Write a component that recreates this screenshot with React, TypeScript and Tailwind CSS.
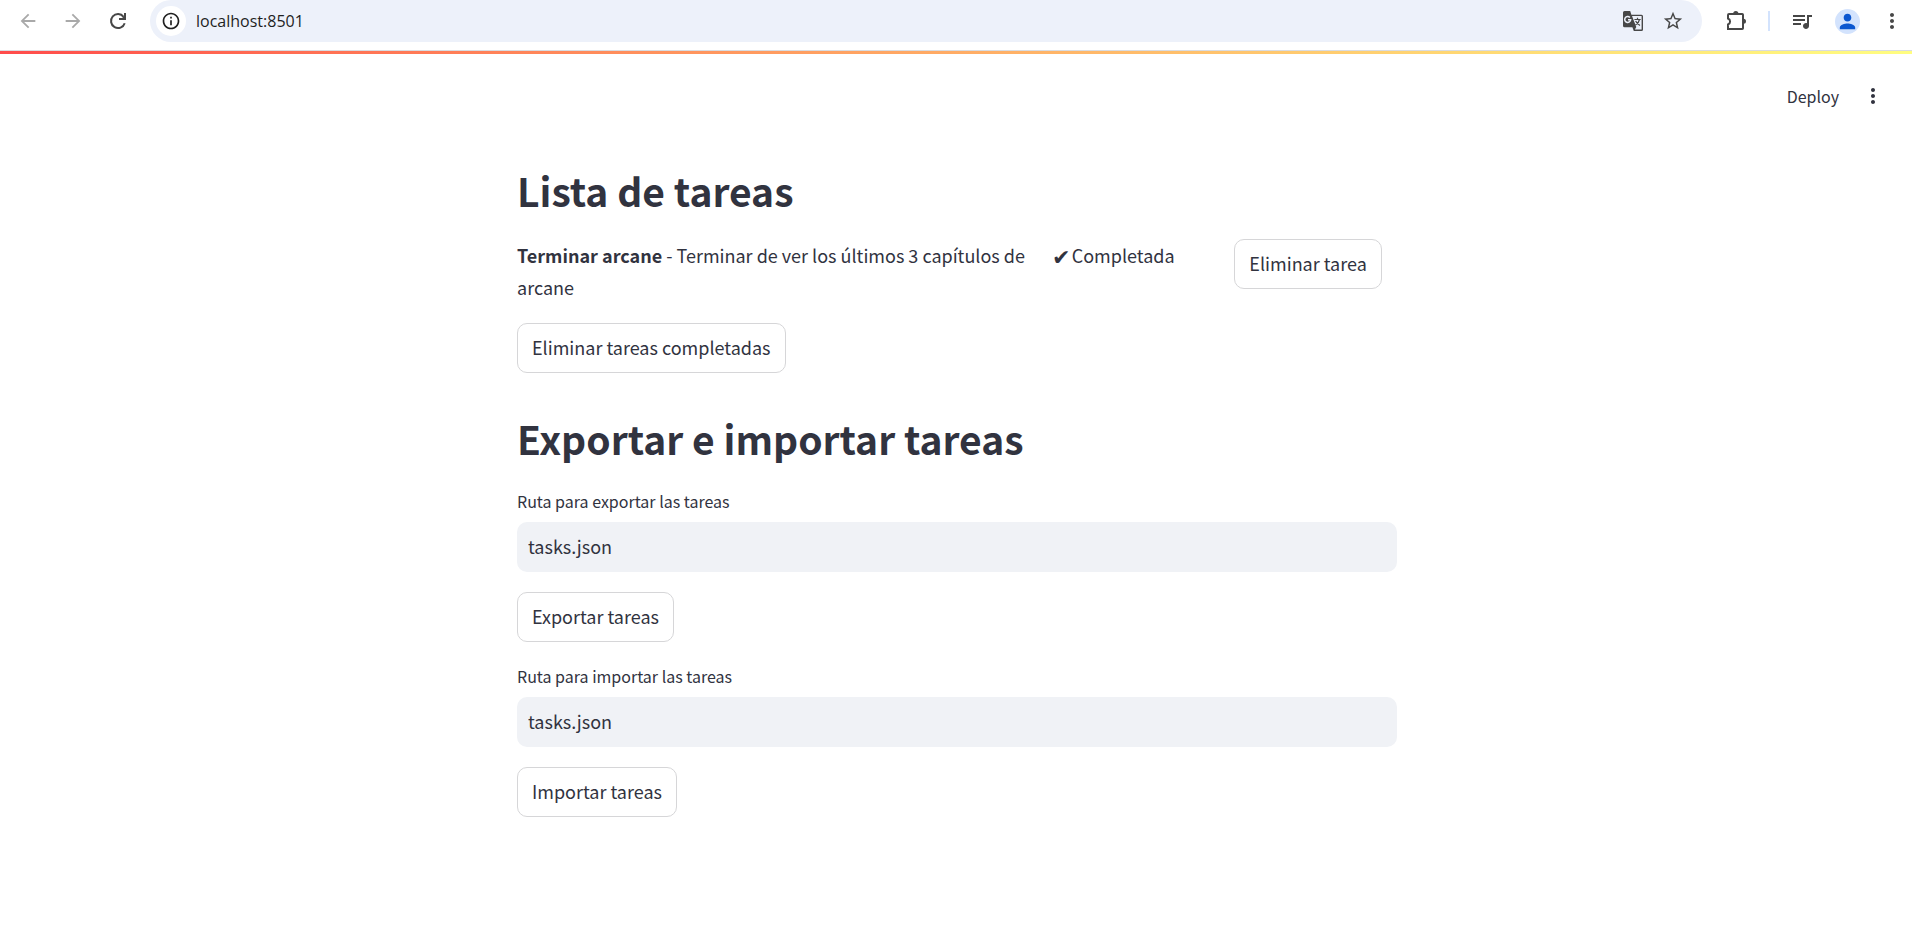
import { useId, useState } from "react";
import type { ReactNode } from "react";
import {
  MdArrowBack,
  MdArrowForward,
  MdInfoOutline,
  MdMoreVert,
  MdPerson,
  MdQueueMusic,
  MdStarBorder,
} from "react-icons/md";

function IconButton({ label, className = "", children }: { label: string; className?: string; children: ReactNode }) {
  return (
    <button type="button" aria-label={label} className={`flex shrink-0 items-center justify-center ${className}`}>
      {children}
    </button>
  );
}

function ReloadIcon() {
  return (
    <svg width="24" height="24" viewBox="0 0 24 24" aria-hidden="true">
      <path d="M18.700 14.200A7 7 0 1 1 17.600 7.800" fill="none" stroke="currentColor" strokeWidth="2" />
      <path d="M18 4h2v7h-7V9h3.200L18 7.200z" fill="currentColor" />
    </svg>
  );
}

function ExtensionIcon() {
  return (
    <svg width="24" height="24" viewBox="0 0 24 24" aria-hidden="true">
      <path d="M5 5h13.200a.8.8 0 0 1 .8.800v13.400a.8.8 0 0 1-.8.800H4v-4.500a3.200 3.200 0 0 0 0-6V6a1 1 0 0 1 1-1z" fill="none" stroke="currentColor" strokeWidth="2" />
      <path d="M9.200 4.500a2.600 2.600 0 0 1 5.200 0zM19.500 9.700a2.500 2.500 0 0 1 0 5z" fill="currentColor" />
    </svg>
  );
}

function TranslateIcon() {
  return (
    <svg width="22" height="22" viewBox="0 0 22 22" aria-hidden="true">
      <path d="M2.500 1h5.700l1.200 3.700h10.100a1.500 1.500 0 0 1 1.500 1.500v13.300a1.500 1.500 0 0 1-1.500 1.500h-7.700l-1.400-3.700H2.500A1.500 1.500 0 0 1 1 15.800V2.500A1.500 1.500 0 0 1 2.500 1z" fill="#474747" />
      <path d="M10 6h9.600v13.600h-6.700l1.400-2.600z" fill="#edf1fa" />
      <path d="M12.400 9.500h6.300M15.500 7.800v1.700M17.500 9.500c-.5 2.300-1.900 4.300-4 5.600M13.600 11c.9 1.700 2.400 3.200 4.400 4.400" fill="none" stroke="#474747" strokeWidth="1.200" />
      <path d="M7.900 7.400A3 3 0 1 0 8.700 9.700H6" fill="none" stroke="#edf1fa" strokeWidth="1.500" />
    </svg>
  );
}

function BrowserBar() {
  return (
    <div className="flex h-[51px] items-start border-b border-[#d9dce1] bg-white pr-2 pl-4 text-[#474747]">
      <div className="flex h-[42px] items-center gap-[21px] pr-[20px]">
        <IconButton label="Atrás" className="size-6 text-[#a9a9a9]">
          <MdArrowBack size={22} />
        </IconButton>
        <IconButton label="Adelante" className="size-6 text-[#a9a9a9]">
          <MdArrowForward size={22} />
        </IconButton>
        <IconButton label="Recargar" className="size-6">
          <ReloadIcon />
        </IconButton>
      </div>
      <div className="flex h-[42px] grow items-center rounded-full bg-[#edf1fa] pr-[18px] pl-[6px]">
        <IconButton label="Información del sitio" className="size-[30px] rounded-full bg-white text-[#1f1f1f]">
          <MdInfoOutline size={20} />
        </IconButton>
        <input
          aria-label="Dirección"
          defaultValue="localhost:8501"
          className="ml-[10px] min-w-0 grow bg-transparent font-['Open_Sans','Noto_Sans',sans-serif] text-base text-[#1f1f1f] outline-none"
        />
        <div className="flex items-center gap-[18px]">
          <IconButton label="Traducir" className="size-[22px]">
            <TranslateIcon />
          </IconButton>
          <IconButton label="Marcador" className="size-[22px]">
            <MdStarBorder size={22} />
          </IconButton>
        </div>
      </div>
      <div className="flex h-[42px] items-center pl-[22px]">
        <IconButton label="Extensiones" className="size-6">
          <ExtensionIcon />
        </IconButton>
        <div className="mx-5 h-5 w-[2px] bg-[#d3e3fd]" />
        <IconButton label="Multimedia" className="size-6">
          <MdQueueMusic size={24} />
        </IconButton>
        <IconButton label="Perfil" className="ml-[21px] size-[25px] rounded-full bg-[#d3e3fd] text-[#0b57d0]">
          <MdPerson size={23} />
        </IconButton>
        <IconButton label="Menú" className="ml-5 size-6">
          <MdMoreVert size={24} />
        </IconButton>
      </div>
    </div>
  );
}

function AppHeader() {
  return (
    <header className="flex h-[84px] items-center justify-end gap-[22px] pr-[27px]">
      <button type="button" className="text-base">
        Deploy
      </button>
      <IconButton label="Opciones" className="size-6">
        <MdMoreVert size={24} />
      </IconButton>
    </header>
  );
}

function SectionTitle({ children }: { children: ReactNode }) {
  return <h2 className="pt-[18px] pb-[2px] text-[39px] leading-[54px] font-semibold">{children}</h2>;
}

function OutlineButton({ children }: { children: ReactNode }) {
  return (
    <button
      type="button"
      className="flex h-[50px] items-center rounded-[10px] border border-[#d6d6d8] bg-white px-[14px] pb-[2px] text-lg whitespace-nowrap"
    >
      {children}
    </button>
  );
}

function PathField({ label }: { label: string }) {
  const id = useId();
  const [path, setPath] = useState("tasks.json");
  return (
    <div className="w-full">
      <label htmlFor={id} className="block h-[35px] text-base leading-[28px]">
        {label}
      </label>
      <input
        id={id}
        type="text"
        value={path}
        onChange={(event) => setPath(event.target.value)}
        className="block h-[50px] w-full rounded-[10px] bg-[#f0f2f6] px-[11px] pb-[2px] text-lg outline-none"
      />
    </div>
  );
}

export default function App() {
  return (
    <div className="min-h-screen bg-white font-['Noto_Sans_CJK_SC','Source_Sans_Pro',sans-serif] text-[#31333f]">
      <BrowserBar />
      <div className="h-[3px] bg-linear-to-r from-[#ff4b4b] to-[#fffd80]" />
      <AppHeader />
      <div className="pt-[7px] pl-[2px]">
        <main className="mx-auto flex w-full max-w-[880px] flex-col items-start gap-5">
          <SectionTitle>Lista de tareas</SectionTitle>
          <div className="flex w-full gap-5">
            <p className="grow basis-[calc(60%-20px)] text-lg leading-[32px]">
              <strong className="font-semibold">Terminar arcane</strong> - Terminar de ver los últimos 3 capítulos de
              arcane
            </p>
            <p className="flex grow basis-[calc(20%-20px)] gap-[2px] text-lg leading-[32px]">
              <span className="text-[22px]">✔</span>
              <span>Completada</span>
            </p>
            <div className="grow basis-[calc(20%-20px)]">
              <OutlineButton>Eliminar tarea</OutlineButton>
            </div>
          </div>
          <OutlineButton>Eliminar tareas completadas</OutlineButton>
          <SectionTitle>Exportar e importar tareas</SectionTitle>
          <PathField label="Ruta para exportar las tareas" />
          <OutlineButton>Exportar tareas</OutlineButton>
          <PathField label="Ruta para importar las tareas" />
          <OutlineButton>Importar tareas</OutlineButton>
        </main>
      </div>
    </div>
  );
}
